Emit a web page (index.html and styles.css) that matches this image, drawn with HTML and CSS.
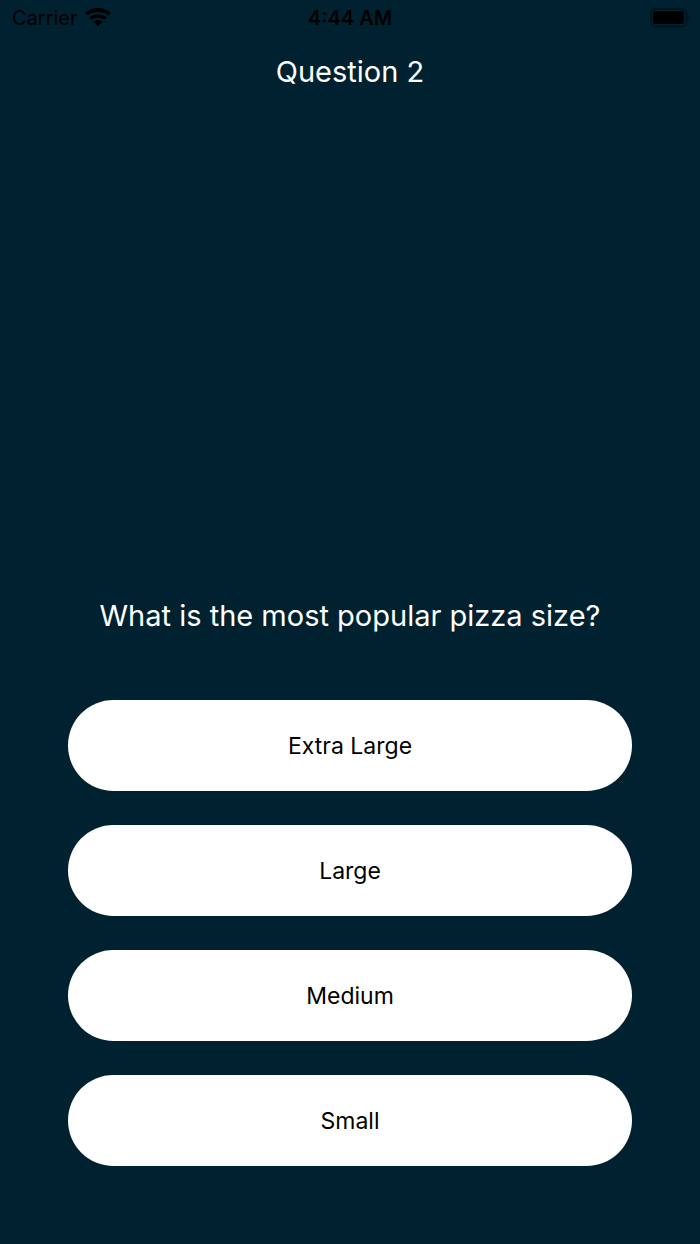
FILE: index.html
```html
<!DOCTYPE html>
<html lang="en">
<head>
<meta charset="utf-8">
<meta name="viewport" content="width=device-width, initial-scale=1">
<title>Question 2</title>
<link rel="stylesheet" href="styles.css">
</head>
<body>
<div class="status">
  <div class="carrier"><span>Carrier</span>
    <svg class="wifi" viewBox="0 0 26 19" aria-hidden="true"><path d="M13 0C8 0 3.500 1.800 0 5L2.600 7.600C5.500 5.100 9 3.900 13 3.900S20.500 5.100 23.400 7.600L26 5C22.500 1.800 18 0 13 0ZM13 6.200C9.700 6.200 6.700 7.300 4.300 9.300L6.800 11.800C8.400 10.500 10.600 9.800 13 9.800S17.600 10.500 19.200 11.800L21.700 9.300C19.300 7.300 16.300 6.200 13 6.200ZM13 12.100C11.300 12.100 9.700 12.700 8.500 13.600L13 18.300L17.500 13.600C16.300 12.700 14.700 12.100 13 12.100Z"/></svg>
  </div>
  <time class="clock">4:44 AM</time>
  <div class="power"><svg class="battery" viewBox="0 0 42 20" aria-hidden="true"><rect class="shell" x="2" y="1" width="35.500" height="17.500" rx="5"/><rect x="4" y="3" width="31" height="13" rx="2.500"/><path class="cap" d="M39.500 6.500Q41.500 7.500 41.500 9.500T39.500 13Z"/></svg></div>
</div>
<main class="quiz">
  <h1 class="title">Question 2</h1>
  <p class="question">What is the most popular pizza size?</p>
  <div class="answers">
    <button class="answer" type="button">Extra Large</button>
    <button class="answer" type="button">Large</button>
    <button class="answer" type="button">Medium</button>
    <button class="answer" type="button">Small</button>
  </div>
</main>
</body>
</html>
```
FILE: styles.css
```css
* { box-sizing: border-box; }
body {
  margin: 0;
  min-height: 100vh;
  display: flex;
  flex-direction: column;
  background: #002230;
  color: #fff;
  font-family: Inter, "Liberation Sans", sans-serif;
}
.status {
  display: grid;
  grid-template-columns: 1fr auto 1fr;
  align-items: center;
  height: 36px;
  padding: 0 9px;
  color: #000;
  font-size: 20px;
  line-height: 24px;
}
.carrier { display: flex; align-items: center; gap: 7px; padding-left: 3px; }
.wifi { width: 26px; height: 19px; margin-bottom: 2px; }
.clock { font-weight: 600; }
.power { display: flex; justify-content: flex-end; }
.battery { width: 42px; height: 20px; }
.shell { fill: none; stroke: #000; stroke-opacity: 0.4; stroke-width: 2; }
.cap { fill-opacity: 0.4; }
.quiz {
  flex: 1;
  display: flex;
  flex-direction: column;
  padding: 16px 68px 78px;
  text-align: center;
}
.title, .question {
  margin: 0;
  font-size: 29px;
  font-weight: 400;
  line-height: 40px;
}
.question { margin-top: auto; }
.answers { display: flex; flex-direction: column; gap: 34px; margin-top: 64px; }
.answer {
  height: 91px;
  border: 0;
  border-radius: 46px;
  background: #fff;
  color: #000;
  font: inherit;
  font-size: 23px;
}
```
